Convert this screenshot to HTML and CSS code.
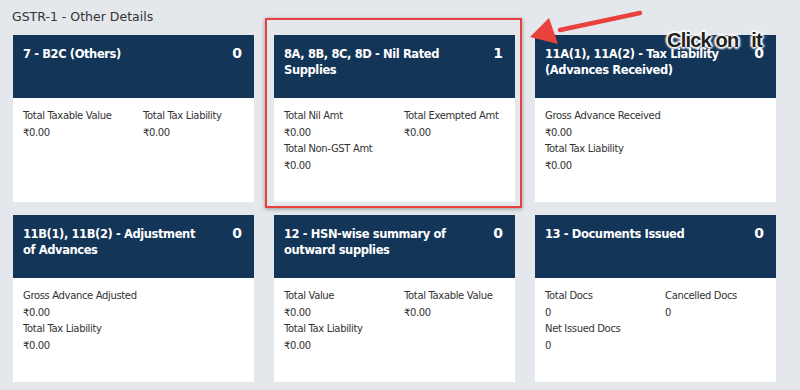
FILE: index.html
```html
<!DOCTYPE html>
<html>
<head>
  <title>GSTR-1 - Other Details</title>
  <link rel="stylesheet" href="styles.css">
</head>
<body>
  <div class="page">
    <h4 class="page-title">GSTR-1 - Other Details</h4>

    <div class="tiles">
      <div class="tile">
        <div class="tile-head">
          <span class="tile-name">7 - B2C (Others)</span>
          <span class="tile-count">0</span>
        </div>
        <div class="tile-body">
          <div class="field"><p>Total Taxable Value</p><p>₹0.00</p></div>
          <div class="field"><p>Total Tax Liability</p><p>₹0.00</p></div>
        </div>
      </div>

      <div class="tile">
        <div class="tile-head">
          <span class="tile-name">8A, 8B, 8C, 8D - Nil Rated Supplies</span>
          <span class="tile-count">1</span>
        </div>
        <div class="tile-body">
          <div class="field"><p>Total Nil Amt</p><p>₹0.00</p></div>
          <div class="field"><p>Total Exempted Amt</p><p>₹0.00</p></div>
          <div class="field"><p>Total Non-GST Amt</p><p>₹0.00</p></div>
        </div>
      </div>

      <div class="tile">
        <div class="tile-head">
          <span class="tile-name">11A(1), 11A(2) - Tax Liability (Advances Received)</span>
          <span class="tile-count">0</span>
        </div>
        <div class="tile-body single">
          <div class="field"><p>Gross Advance Received</p><p>₹0.00</p></div>
          <div class="field"><p>Total Tax Liability</p><p>₹0.00</p></div>
        </div>
      </div>

      <div class="tile">
        <div class="tile-head">
          <span class="tile-name">11B(1), 11B(2) - Adjustment<br>of Advances</span>
          <span class="tile-count">0</span>
        </div>
        <div class="tile-body single">
          <div class="field"><p>Gross Advance Adjusted</p><p>₹0.00</p></div>
          <div class="field"><p>Total Tax Liability</p><p>₹0.00</p></div>
        </div>
      </div>

      <div class="tile">
        <div class="tile-head">
          <span class="tile-name">12 - HSN-wise summary of outward supplies</span>
          <span class="tile-count">0</span>
        </div>
        <div class="tile-body">
          <div class="field"><p>Total Value</p><p>₹0.00</p></div>
          <div class="field"><p>Total Taxable Value</p><p>₹0.00</p></div>
          <div class="field"><p>Total Tax Liability</p><p>₹0.00</p></div>
        </div>
      </div>

      <div class="tile">
        <div class="tile-head">
          <span class="tile-name">13 - Documents Issued</span>
          <span class="tile-count">0</span>
        </div>
        <div class="tile-body">
          <div class="field"><p>Total Docs</p><p>0</p></div>
          <div class="field"><p>Cancelled Docs</p><p>0</p></div>
          <div class="field"><p>Net Issued Docs</p><p>0</p></div>
        </div>
      </div>
    </div>

    <!-- annotation over the screenshot -->
    <div class="highlight"></div>
    <svg class="arrow" width="120" height="40" viewBox="0 0 120 40">
      <line x1="110" y1="3" x2="30" y2="20" stroke="#e8413e" stroke-width="4.5" stroke-linecap="round"/>
      <polygon points="0,27 19,8 28,34" fill="#e8413e"/>
    </svg>
    <div class="callout">Click on <span class="callout-last">it</span></div>
  </div>
</body>
</html>
```

FILE: styles.css
```css
html, body {
  margin: 0;
  padding: 0;
}

body {
  background-color: #e4e7eb;
  font-family: "DejaVu Sans", Verdana, sans-serif;
  color: #333;
}

.page {
  position: relative;
  width: 800px;
  height: 390px;
  overflow: hidden;
  padding: 9px 13px 0;
  box-sizing: border-box;
}

.page-title {
  margin: 0 0 11px -1px;
  font-size: 12.5px;
  font-weight: normal;
  line-height: 15px;
  color: #333;
}

.tiles {
  display: grid;
  grid-template-columns: repeat(3, 241px);
  grid-auto-rows: 167px;
  column-gap: 20px;
  row-gap: 13px;
}

.tile {
  display: flex;
  flex-direction: column;
  background-color: #fff;
}

.tile-head {
  display: flex;
  justify-content: space-between;
  align-items: flex-start;
  height: 63px;
  box-sizing: border-box;
  padding: 11px 12px 0 10px;
  background-color: #133558;
  color: #fff;
  font-weight: bold;
  font-size: 11.5px;
  letter-spacing: -0.4px;
  line-height: 16px;
}

.tile-name {
  max-width: 205px;
}

.tile-count {
  font-size: 14px;
  line-height: 14px;
  letter-spacing: 0;
}

.tile-body {
  display: grid;
  grid-template-columns: 120px 1fr;
  padding: 10px 10px 0;
  font-size: 10px;
  letter-spacing: -0.35px;
  line-height: 16.6px;
  color: #333;
}

.tile-body.single {
  grid-template-columns: 1fr;
}

.field p {
  margin: 0;
}

.highlight {
  position: absolute;
  left: 265px;
  top: 18px;
  width: 253px;
  height: 186px;
  border: 2px solid #e8403f;
  box-shadow: 0 1px 4px rgba(0, 0, 0, 0.35);
}

.arrow {
  position: absolute;
  left: 530px;
  top: 10px;
}

.callout {
  position: absolute;
  left: 667px;
  top: 29px;
  font-family: "Liberation Sans", Arial, sans-serif;
  font-size: 20px;
  font-weight: bold;
  letter-spacing: -0.8px;
  color: #222;
  text-shadow: 0 0 2px #fff, 0 0 2px #fff, 0 0 3px #fff, 2px 0 2px #fff, -2px 0 2px #fff, 0 2px 2px #fff, 0 -2px 2px #fff;
}

.callout-last {
  margin-left: 8px;
}
```
